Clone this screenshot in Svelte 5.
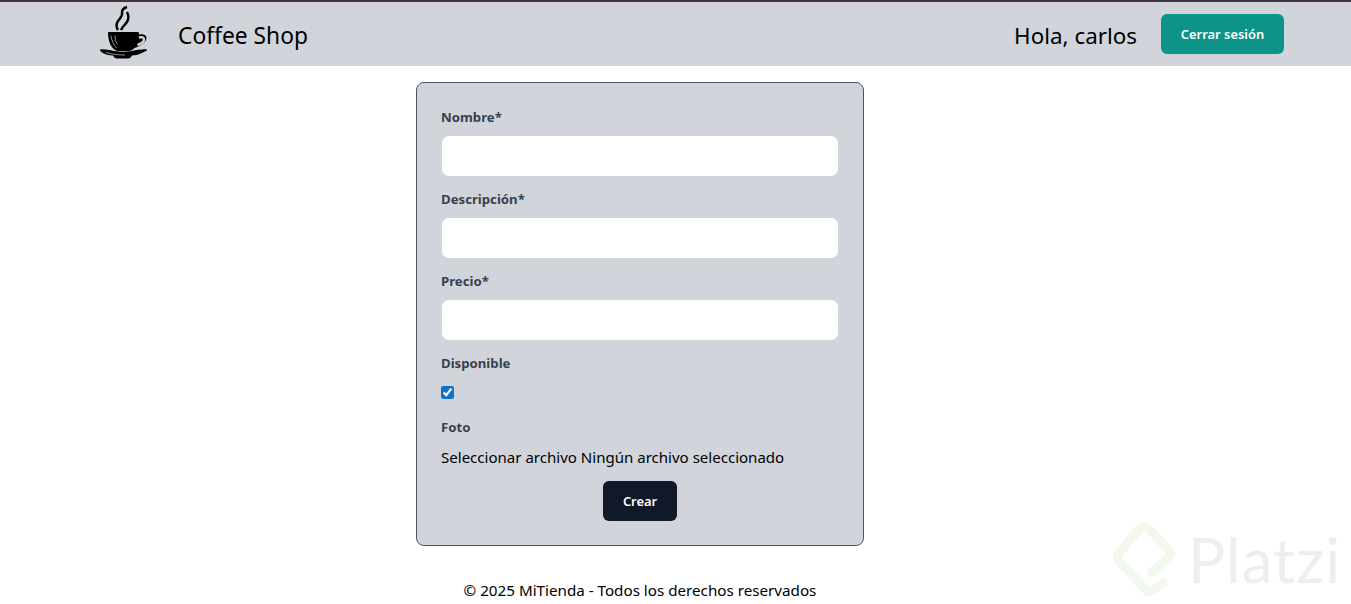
<script>
	let disponible = $state(true);
</script>

<div class="page">
	<nav class="navbar">
		<div class="brand">
			<svg class="logo" viewBox="0 0 54 60" aria-hidden="true">
				<path class="steam" d="M21 26c-2-3-2-6 0-9 2-3 5-5 4-9 0-2 2-4 5-5" />
				<path class="steam" d="M24 26c1-3 4-5 6-8 2-3 2-6 0-10" />
				<path class="ink" d="M11 28h30c1 0 1 1 1 2.500 4-1 7.500 0 7.500 3.500 0 4-6 8-12 10-1.500 1.500-3 2.500-5 3H20c-5-2-9-8-9-19z" />
				<path class="handle" d="M42 33.500c3-.8 5 0 5 2 0 2-2.500 4-6.500 5.500" />
				<path class="shine" d="M14 31.500c.5 5 2.500 9 5.500 12.500M18 31.500c0 4 1 7 2.500 9" />
				<path class="ink" d="M3 45.500c5-.5 9 .5 14 1.500 6 1 12 1 18 0 5-1 10-2 15-1.500 .5 1-1 1.500-3 2.500-4 2.500-9 3.500-12 3.500-1 2-2 3-4 3H20c-2 0-3-1-4-3-4 0-8-1-11-3-1-1-2.500-2-2-3z" />
				<path class="shine" d="M9 48.500c7 2 13 2.500 19 2.500" />
			</svg>
			<span class="title">Coffee Shop</span>
		</div>
		<div class="session">
			<span class="greeting">Hola, carlos</span>
			<button class="logout" type="button">Cerrar sesión</button>
		</div>
	</nav>

	<main class="content">
		<form class="card" onsubmit={(e) => e.preventDefault()}>
			<div class="field">
				<label for="nombre">Nombre*</label>
				<input id="nombre" type="text" />
			</div>
			<div class="field">
				<label for="descripcion">Descripción*</label>
				<input id="descripcion" type="text" />
			</div>
			<div class="field">
				<label for="precio">Precio*</label>
				<input id="precio" type="text" />
			</div>
			<div class="field">
				<label for="disponible">Disponible</label>
				<div class="check-row">
					<input id="disponible" type="checkbox" bind:checked={disponible} />
				</div>
			</div>
			<div class="field">
				<span class="label">Foto</span>
				<div class="file-row">Seleccionar archivo Ningún archivo seleccionado</div>
			</div>
			<div class="actions">
				<button class="submit" type="submit">Crear</button>
			</div>
		</form>
	</main>

	<footer class="footer">© 2025 MiTienda - Todos los derechos reservados</footer>

	<div class="watermark" aria-hidden="true">
		<svg class="mark" viewBox="0 0 66 78">
			<path d="M53 63 L41 71 Q39 73 37 71 L9 41 Q6 37 9 33 L30 8 Q34 5 38 8 L59 30 Q62 34 59 37 L42 52" />
		</svg>
		<span class="mark-text">Platzi</span>
	</div>
</div>

<style>
	:global(body) {
		margin: 0;
		background: #fff;
		font-family: "Noto Sans", "Open Sans", sans-serif;
		color: #000;
	}

	.page {
		position: relative;
		height: 604px;
		overflow: hidden;
	}

	.navbar {
		display: flex;
		align-items: center;
		justify-content: space-between;
		box-sizing: border-box;
		height: 66px;
		padding: 0 67px 0 97px;
		background: #d1d5db;
		border-top: 2px solid #44353f;
	}

	.brand,
	.session {
		display: flex;
		align-items: center;
	}

	.logo {
		display: block;
		width: 54px;
		height: 60px;
		margin-right: 27px;
	}

	.steam {
		fill: none;
		stroke: #000;
		stroke-width: 2.400;
	}

	.ink {
		fill: #000;
	}

	.handle {
		fill: none;
		stroke: #d1d5db;
		stroke-width: 2.500;
	}

	.shine {
		fill: none;
		stroke: #8b8e94;
		stroke-width: 1;
	}

	.title,
	.greeting {
		padding-top: 3px;
		line-height: 32px;
	}

	.title {
		font-size: 22.800px;
	}

	.greeting {
		margin-right: 24px;
		font-size: 22.400px;
	}

	.logout {
		width: 123px;
		height: 40px;
		padding: 0;
		border: 0;
		border-radius: 6px;
		background: #0d9488;
		color: #fff;
		font: 600 12.900px/20px "Noto Sans", sans-serif;
	}

	.content {
		display: flex;
		justify-content: center;
		width: 1280px;
		padding-top: 16px;
	}

	.card {
		box-sizing: border-box;
		width: 448px;
		padding: 24px;
		background: #d1d5db;
		border: 1px solid #4b5563;
		border-radius: 8px;
	}

	.field {
		margin-bottom: 12px;
	}

	label,
	.label {
		display: block;
		margin-bottom: 8px;
		color: #374151;
		font-size: 13.200px;
		font-weight: 700;
		line-height: 20px;
	}

	input[type="text"] {
		display: block;
		box-sizing: border-box;
		width: 100%;
		height: 42px;
		background: #fff;
		border: 1px solid #d1d5db;
		border-radius: 8px;
	}

	.check-row {
		display: flex;
		align-items: flex-start;
		height: 24px;
	}

	input[type="checkbox"] {
		width: 13px;
		height: 13px;
		margin: 5px 0 0;
		accent-color: #1272c4;
	}

	.file-row {
		font-size: 15.050px;
		line-height: 24px;
	}

	.actions {
		display: flex;
		justify-content: center;
	}

	.submit {
		width: 74px;
		height: 40px;
		padding: 0;
		border: 0;
		border-radius: 6px;
		background: #111827;
		color: #fff;
		font: 600 12.900px/20px "Noto Sans", sans-serif;
	}

	.footer {
		width: 1280px;
		padding-top: 32px;
		font-size: 15.200px;
		line-height: 24px;
		text-align: center;
	}

	.watermark {
		position: absolute;
		left: 1110px;
		top: 520px;
		display: flex;
		align-items: center;
		pointer-events: none;
	}

	.mark {
		width: 66px;
		height: 78px;
	}

	.mark path {
		fill: none;
		stroke: #f3f8ec;
		stroke-width: 9;
		stroke-linecap: round;
		stroke-linejoin: round;
	}

	.mark-text {
		margin-left: 12px;
		color: #eeeeee;
		font: 400 62px/1 "Lato", sans-serif;
		letter-spacing: 1px;
	}
</style>
